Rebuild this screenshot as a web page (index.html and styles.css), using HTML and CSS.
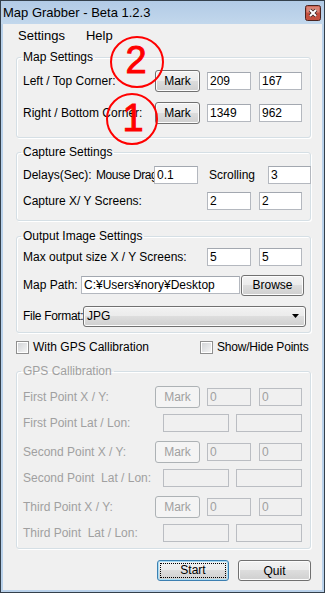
FILE: index.html
```html
<!DOCTYPE html>
<html lang="ja">
<head>
  <meta charset="UTF-8" />
  <title>Map Grabber - Beta 1.2.3</title>
  <link rel="stylesheet" href="styles.css">
</head>
<body>
  <div class="window">
    <div class="titlebar">
      <span class="title">Map Grabber - Beta 1.2.3</span>
      <svg class="close" width="16" height="16" viewBox="0 0 16 16">
        <rect x="0.5" y="0.5" width="15" height="15" rx="2" fill="#c4503f" stroke="#4b2420" />
        <rect x="1.5" y="1.5" width="13" height="6" fill="#e29a8e" opacity="0.7" />
        <path d="M5 5 L11 11 M11 5 L5 11" stroke="#3b2626" stroke-width="3.6" />
        <path d="M5 5 L11 11 M11 5 L5 11" stroke="#fff" stroke-width="2" />
      </svg>
    </div>

    <div class="client">
      <div class="menu">
        <span>Settings</span>
        <span>Help</span>
      </div>

      <fieldset class="group map-group">
        <legend>Map Settings</legend>
        <div class="row">
          <span class="label">Left / Top Corner:</span>
          <button class="btn mark">Mark</button>
          <input class="field" value="209">
          <input class="field" value="167">
        </div>
        <div class="row">
          <span class="label">Right / Bottom Corner:</span>
          <button class="btn mark">Mark</button>
          <input class="field" value="1349">
          <input class="field" value="962">
        </div>
      </fieldset>

      <fieldset class="group capture-group">
        <legend>Capture Settings</legend>
        <div class="row">
          <span class="label delays">Delays(Sec):</span>
          <span class="label drag">Mouse Drag</span>
          <input class="field first" value="0.1">
          <span class="label scroll">Scrolling</span>
          <input class="field" value="3">
        </div>
        <div class="row">
          <span class="label wide">Capture X/ Y Screens:</span>
          <input class="field first" value="2">
          <input class="field" value="2">
        </div>
      </fieldset>

      <fieldset class="group output-group">
        <legend>Output Image Settings</legend>
        <div class="row">
          <span class="label wide">Max output size X / Y Screens:</span>
          <input class="field first" value="5">
          <input class="field" value="5">
        </div>
        <div class="row path-row">
          <span class="label path">Map Path:</span>
          <input class="field first path-field" value="C:¥Users¥nory¥Desktop">
          <button class="btn browse">Browse</button>
        </div>
        <div class="row format-row">
          <span class="label format">File Format:</span>
          <div class="combo">
            <span>JPG</span>
            <svg width="7" height="4" viewBox="0 0 7 4"><polygon points="0,0 7,0 3.5,4" fill="#000" /></svg>
          </div>
        </div>
      </fieldset>

      <div class="checks">
        <label class="check"><span class="box"></span>With GPS Callibration</label>
        <label class="check"><span class="box"></span>Show/Hide Points</label>
      </div>

      <fieldset class="group gps-group">
        <legend>GPS Callibration</legend>
        <div class="row">
          <span class="label">First Point X / Y:</span>
          <button class="btn mark" disabled>Mark</button>
          <input class="field" value="0" disabled>
          <input class="field" value="0" disabled>
        </div>
        <div class="row latlon">
          <span class="label">First Point Lat / Lon:</span>
          <input class="field wide-field" disabled>
          <input class="field wide-field" disabled>
        </div>
        <div class="row">
          <span class="label">Second Point X / Y:</span>
          <button class="btn mark" disabled>Mark</button>
          <input class="field" value="0" disabled>
          <input class="field" value="0" disabled>
        </div>
        <div class="row latlon">
          <span class="label">Second Point &nbsp;Lat / Lon:</span>
          <input class="field wide-field" disabled>
          <input class="field wide-field" disabled>
        </div>
        <div class="row">
          <span class="label">Third Point X / Y:</span>
          <button class="btn mark" disabled>Mark</button>
          <input class="field" value="0" disabled>
          <input class="field" value="0" disabled>
        </div>
        <div class="row latlon">
          <span class="label">Third Point &nbsp;Lat / Lon:</span>
          <input class="field wide-field" disabled>
          <input class="field wide-field" disabled>
        </div>
      </fieldset>

      <div class="actions">
        <button class="btn action default"><span class="focus">Start</span></button>
        <button class="btn action">Quit</button>
      </div>
    </div>

    <!-- red annotations drawn over the form -->
    <svg class="marks" width="80" height="130" viewBox="0 0 80 130">
      <ellipse cx="37" cy="32" rx="26" ry="25" fill="none" stroke="#f00" stroke-width="2" />
      <text x="36" y="43" class="digit">2</text>
      <ellipse cx="32" cy="89" rx="25" ry="25" fill="none" stroke="#f00" stroke-width="2" />
      <text x="33" y="101" class="digit">1</text>
    </svg>
  </div>
</body>
</html>
```

FILE: styles.css
```css
* {
  box-sizing: border-box;
}

body {
  margin: 0;
  font-family: "Liberation Sans", Arial, sans-serif;
  font-size: 12px;
  color: #000;
  background: #fff;
}

.window {
  position: relative;
  width: 325px;
  height: 593px;
  border: 1px solid #34404c;
  background: #b9d1ea;
  display: flex;
  flex-direction: column;
}

.titlebar {
  height: 23px;
  display: flex;
  align-items: center;
  justify-content: space-between;
  padding: 0 3px 0 2px;
  background: linear-gradient(#b2cbe6, #c2d7ec);
  font-size: 13px;
}

.close {
  display: block;
  margin-top: 1px;
}

.client {
  flex: 1;
  margin: 0 2px 2px;
  background: #f0f0f0;
}

.menu {
  display: flex;
  gap: 21px;
  padding-left: 15px;
  height: 23px;
  line-height: 23px;
  font-size: 13px;
}

/* group boxes */
.group {
  margin: 3px 11px 0 13px;
  padding: 6px 0 13px 6px;
  border: 1px solid #d5dfe5;
  border-radius: 3px;
  box-shadow: inset 1px 1px 0 #fff, 1px 1px 0 #fff;
  min-inline-size: 0;
}

.group legend {
  padding: 0 2px;
  margin-left: -2px;
  line-height: 14px;
}

.row {
  display: flex;
  align-items: center;
  height: 22px;
}

.label {
  width: 132px;
  flex-shrink: 0;
  white-space: nowrap;
}

.map-group .row + .row {
  margin-top: 10px;
}

.capture-group {
  margin-top: 7px;
  padding-top: 5px;
  padding-bottom: 8px;
}

.capture-group .row + .row {
  margin-top: 4px;
}

.label.delays {
  width: 73px;
}

.label.drag {
  width: 58px;
  overflow: hidden;
  letter-spacing: -0.4px;
}

.label.scroll {
  width: 51px;
  margin-left: 11px;
}

.label.wide {
  width: 184px;
}

.output-group {
  margin-top: 8px;
  padding-top: 3px;
  padding-bottom: 5px;
}

.path-row {
  margin-top: 6px;
}

.format-row {
  margin-top: 9px;
}

.label.path {
  width: 58px;
}

.label.format {
  width: 60px;
  overflow: hidden;
  letter-spacing: -0.3px;
}

/* controls */
.btn {
  font: inherit;
  color: #000;
  height: 22px;
  padding: 0;
  border: 1px solid #707070;
  border-radius: 3px;
  background: linear-gradient(#f2f2f2 0%, #ebebeb 49%, #dddddd 50%, #cfcfcf 100%);
  box-shadow: inset 0 0 0 1px #fcfcfc;
}

.btn.mark {
  width: 45px;
  margin-right: 7px;
}

.btn:disabled {
  color: #a0a0a0;
  border-color: #adb2b5;
  background: #f4f4f4;
  box-shadow: none;
}

.btn.browse {
  width: 63px;
  height: 21px;
  margin-left: 1px;
}

.field {
  font: inherit;
  color: #000;
  width: 43px;
  height: 18px;
  padding: 0 2px;
  border: 1px solid #b4b8bf;
  border-top-color: #a3a8b0;
  background: #fff;
  margin-left: 8px;
  outline: none;
}

.row .btn + .field,
.field.first {
  margin-left: 0;
  width: 44px;
}

.field.path-field {
  width: 159px;
}

.field:disabled {
  color: #a0a0a0;
  background: #f0f0f0;
  border-color: #babdc2;
}

.latlon .label {
  width: 140px;
}

.field.wide-field {
  width: 66px;
  margin-left: 0;
}

.field.wide-field + .field.wide-field {
  margin-left: 7px;
}

.combo {
  width: 223px;
  height: 21px;
  display: flex;
  align-items: center;
  justify-content: space-between;
  padding: 0 6px 0 3px;
  border: 1px solid #707070;
  border-radius: 3px;
  background: linear-gradient(#f2f2f2 0%, #ebebeb 49%, #dddddd 50%, #cfcfcf 100%);
  box-shadow: inset 0 0 0 1px #fcfcfc;
}

.checks {
  display: grid;
  grid-template-columns: 184px auto;
  margin: 5px 0 0 13px;
  height: 18px;
  align-items: center;
}

.check {
  display: flex;
  align-items: center;
  gap: 4px;
  white-space: nowrap;
}

.check:last-child {
  letter-spacing: -0.2px;
}

.box {
  width: 13px;
  height: 13px;
  border: 1px solid #8f8f8f;
  background: linear-gradient(135deg, #cfd1d4, #f7f7f7);
  box-shadow: inset 0 0 0 1px #fff;
}

.gps-group {
  margin-top: 8px;
  padding-top: 8px;
  padding-bottom: 4px;
  color: #a0a0a0;
}

.gps-group .row + .latlon {
  margin-top: 4px;
}

.gps-group .latlon + .row {
  margin-top: 7px;
}

.actions {
  display: flex;
  justify-content: flex-end;
  gap: 9px;
  margin: 11px 11px 0 0;
}

.btn.action {
  width: 73px;
  height: 21px;
}

.btn.default {
  width: 72px;
  border-color: #3c7fb1;
  box-shadow: inset 0 0 0 1px #a8ddf5;
  display: flex;
  padding: 2px;
}

.focus {
  flex: 1;
  border: 1px dotted #000;
  line-height: 13px;
}

.marks {
  position: absolute;
  left: 99px;
  top: 29px;
}

.digit {
  font-family: "Liberation Sans", Arial, sans-serif;
  font-size: 38px;
  fill: #f00;
  stroke: #f00;
  stroke-width: 0.9px;
  text-anchor: middle;
}
```
